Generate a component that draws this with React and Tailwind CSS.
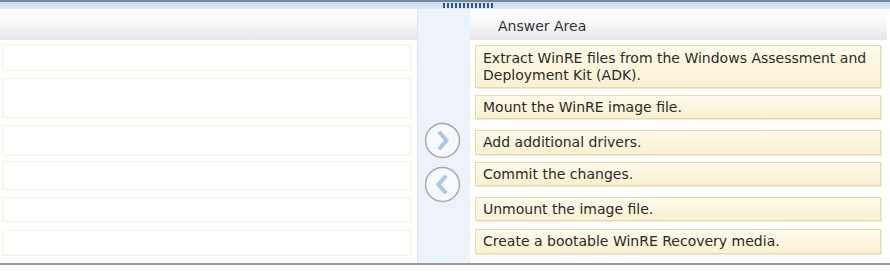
import React from "react";

const answers = [
  { text: "Extract WinRE files from the Windows Assessment and Deployment Kit (ADK).", cls: "mt-[5px] h-[43px] py-[4px]" },
  { text: "Mount the WinRE image file.", cls: "mt-[7px] h-[24px]" },
  { text: "Add additional drivers.", cls: "mt-[11px] h-[25px]" },
  { text: "Commit the changes.", cls: "mt-[7px] h-[24px]" },
  { text: "Unmount the image file.", cls: "mt-[11px] h-[24px]" },
  { text: "Create a bootable WinRE Recovery media.", cls: "mt-[8px] h-[25px] text-[13.5px]" },
];

const slots = [
  "mt-[4px] h-[27px]",
  "mt-[7px] h-[40px]",
  "mt-[7px] h-[31px]",
  "mt-[5px] h-[29px]",
  "mt-[7px] h-[25px]",
  "mt-[8px] h-[26px]",
];

const Arrow = ({ dir }) => (
  <svg width="37" height="37" viewBox="0 0 36 36">
    <circle cx="18" cy="18" r="16.5" fill="#f7f9fc" stroke="#a3a9b0" strokeWidth="1.4" />
    {dir === "right" ? (
      <path d="M14.5 9.5 L22 18 L14.5 26.5" fill="none" stroke="#a9c9e6" strokeWidth="4" strokeLinejoin="round" />
    ) : (
      <path d="M21.5 9.5 L14 18 L21.5 26.5" fill="none" stroke="#a9c9e6" strokeWidth="4" strokeLinejoin="round" />
    )}
  </svg>
);

export default function App() {
  return (
    <div className="w-[890px] h-[272px] bg-white text-[#2a2a2a] font-['DejaVu_Sans',Verdana,sans-serif] overflow-hidden">
      {/* top splitter bar */}
      <div className="h-[9px] border-t-2 border-[#7c8794] bg-gradient-to-b from-[#c7def4] to-[#dbe9f7] flex items-center">
        <div className="ml-[443px] w-[51px] h-[5px] bg-[repeating-linear-gradient(90deg,#34567f_0px,#34567f_2px,transparent_2px,transparent_4px)]" />
      </div>

      <div className="flex h-[256px] border-b-2 border-[#9a9a9a]">
        {/* source list */}
        <div className="w-[417px] flex flex-col">
          <div className="h-[31px] bg-gradient-to-b from-white via-[#f6f6f7] to-[#e6e6ea]" />
          <div className="flex flex-col pl-[2px] pr-[6px]">
            {slots.map((s, i) => (
              <div key={i} className={`${s} border border-[#faf4da] bg-white`} />
            ))}
          </div>
        </div>

        {/* move buttons */}
        <div className="w-[53px] bg-[#eef3fa] border-l border-[#dde5ef] flex flex-col items-center pt-[113px] gap-[7px] pr-[3px]">
          <Arrow dir="right" />
          <Arrow dir="left" />
        </div>

        {/* answer area */}
        <div className="flex-1 flex flex-col">
          <div className="h-[31px] mr-[3px] pt-[3px] bg-gradient-to-b from-white via-[#f6f6f7] to-[#e6e6ea] flex items-center pl-[28px] text-[14px] text-[#333]">
            Answer Area
          </div>
          <div className="flex flex-col pl-[5px] pr-[9px]">
            {answers.map((a, i) => (
              <div
                key={i}
                className={`${a.cls} border border-[#e6dcaa] bg-gradient-to-b from-[#fefaea] to-[#fbf1d2] px-[7px] flex items-center text-[14px] leading-[17px] shadow-[1px_1px_0_#f1ead0]`}
              >
                {a.text}
              </div>
            ))}
          </div>
        </div>
      </div>
    </div>
  );
}
